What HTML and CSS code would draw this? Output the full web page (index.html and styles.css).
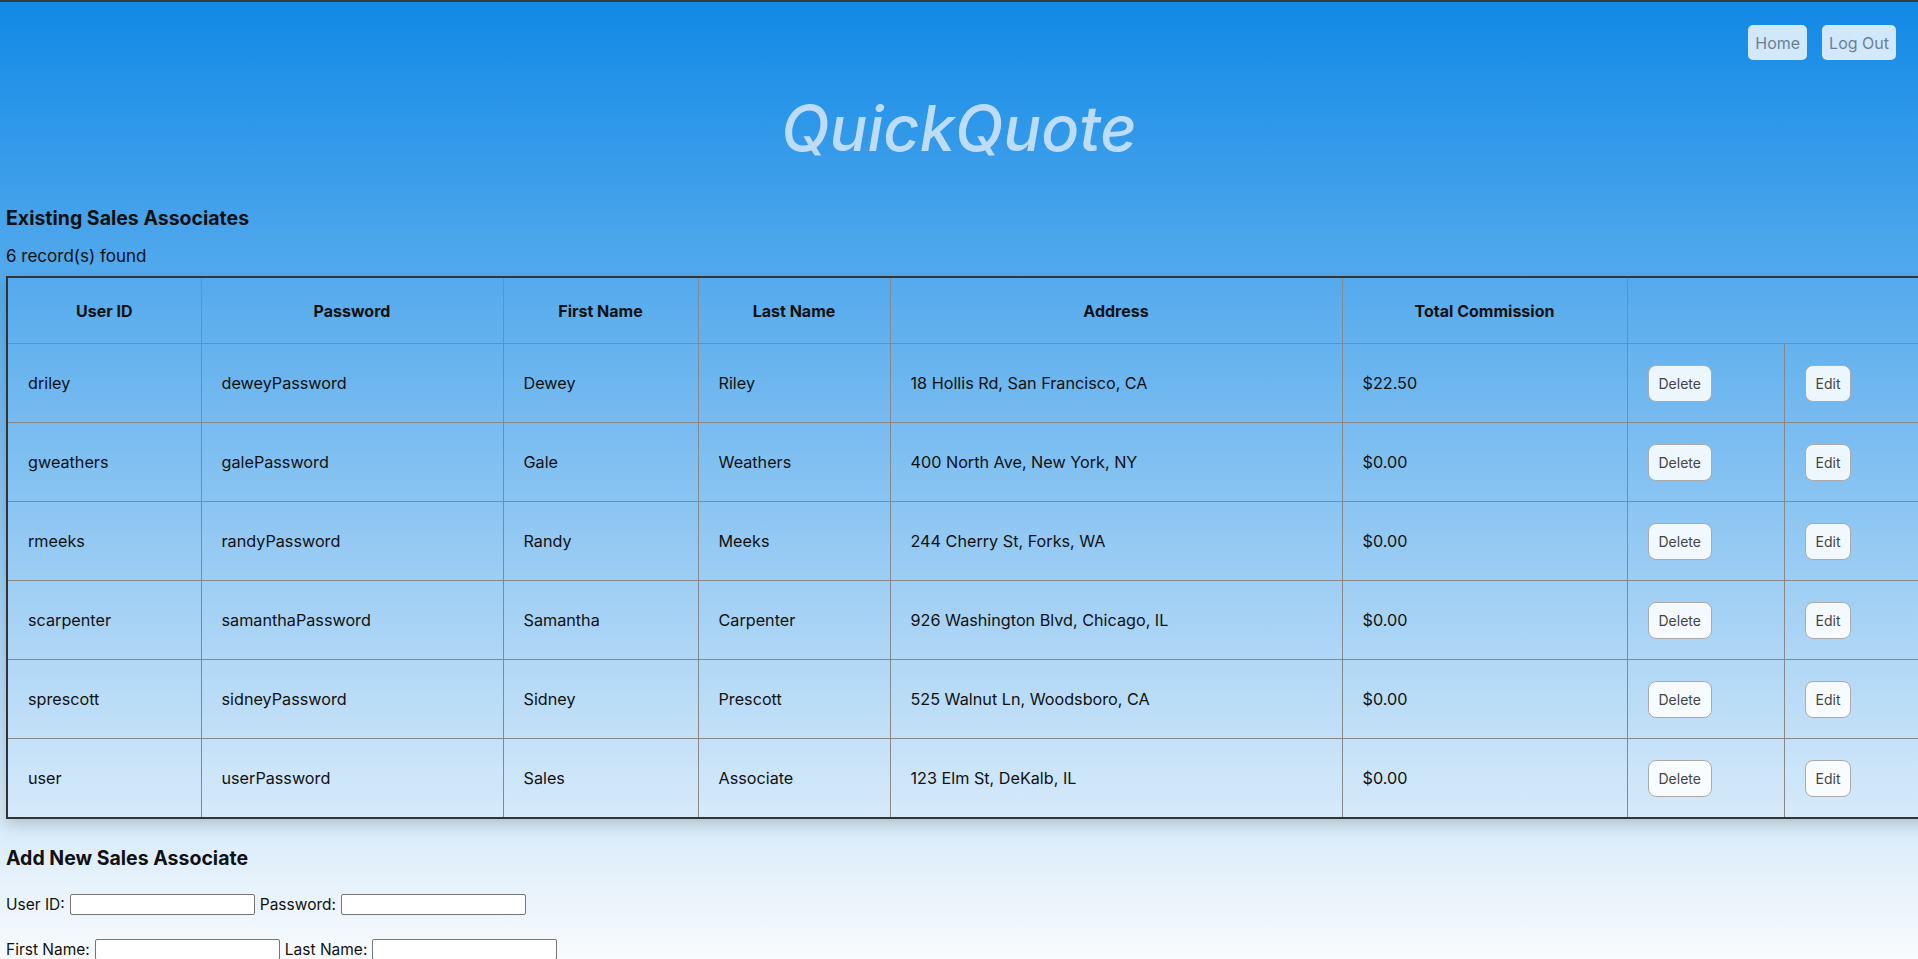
FILE: index.html
```html
<!DOCTYPE html>
<html lang="en">
<head>
<meta charset="utf-8">
<title>QuickQuote - Sales Associates</title>
<link rel="stylesheet" href="styles.css">
</head>
<body>
<header class="topbar">
  <nav class="nav">
    <a class="nav-btn" href="#">Home</a>
    <a class="nav-btn" href="#">Log Out</a>
  </nav>
  <h1 class="brand">QuickQuote</h1>
</header>
<main class="content">
  <section class="existing">
    <h3 class="section-title">Existing Sales Associates</h3>
    <p class="count">6 record(s) found</p>
    <table class="grid">
      <colgroup>
        <col class="c-id"><col class="c-pw"><col class="c-first"><col class="c-last"><col class="c-addr"><col class="c-comm"><col class="c-del"><col class="c-edit">
      </colgroup>
      <thead>
        <tr><th>User ID</th><th>Password</th><th>First Name</th><th>Last Name</th><th>Address</th><th>Total Commission</th><th colspan="2"></th></tr>
      </thead>
      <tbody>
        <tr><td>driley</td><td>deweyPassword</td><td>Dewey</td><td>Riley</td><td>18 Hollis Rd, San Francisco, CA</td><td>$22.50</td><td><button class="btn">Delete</button></td><td><button class="btn">Edit</button></td></tr>
        <tr><td>gweathers</td><td>galePassword</td><td>Gale</td><td>Weathers</td><td>400 North Ave, New York, NY</td><td>$0.00</td><td><button class="btn">Delete</button></td><td><button class="btn">Edit</button></td></tr>
        <tr><td>rmeeks</td><td>randyPassword</td><td>Randy</td><td>Meeks</td><td>244 Cherry St, Forks, WA</td><td>$0.00</td><td><button class="btn">Delete</button></td><td><button class="btn">Edit</button></td></tr>
        <tr><td>scarpenter</td><td>samanthaPassword</td><td>Samantha</td><td>Carpenter</td><td>926 Washington Blvd, Chicago, IL</td><td>$0.00</td><td><button class="btn">Delete</button></td><td><button class="btn">Edit</button></td></tr>
        <tr><td>sprescott</td><td>sidneyPassword</td><td>Sidney</td><td>Prescott</td><td>525 Walnut Ln, Woodsboro, CA</td><td>$0.00</td><td><button class="btn">Delete</button></td><td><button class="btn">Edit</button></td></tr>
        <tr><td>user</td><td>userPassword</td><td>Sales</td><td>Associate</td><td>123 Elm St, DeKalb, IL</td><td>$0.00</td><td><button class="btn">Delete</button></td><td><button class="btn">Edit</button></td></tr>
      </tbody>
    </table>
  </section>
  <section class="add">
    <h3 class="section-title add-title">Add New Sales Associate</h3>
    <form class="add-form">
      <div class="form-row">
        <label for="uid">User ID:</label><input id="uid" type="text">
        <label for="pw">Password:</label><input id="pw" type="text">
      </div>
      <div class="form-row">
        <label for="fn">First Name:</label><input id="fn" type="text">
        <label for="ln">Last Name:</label><input id="ln" type="text">
      </div>
      <div class="form-row">
        <label for="addr">Address:</label><input id="addr" class="wide" type="text">
      </div>
      <div class="form-row">
        <button class="btn" type="button">Add Sales Associate</button>
      </div>
    </form>
  </section>
</main>
</body>
</html>
```
FILE: styles.css
```css
html {
  border-top: 2px solid #3a3a3a;
  background: #f9fbfd linear-gradient(180deg, #1189e6 0px, #f9fbfd 958px) no-repeat;
}
body {
  margin: 0;
  font-family: Inter, "Noto Sans", sans-serif;
  font-size: 16px;
  color: #111;
}
.nav {
  display: flex;
  justify-content: flex-end;
  gap: 15px;
  padding: 23px 22px 0 0;
}
.nav-btn {
  display: flex;
  align-items: center;
  height: 35px;
  padding: 0 7px;
  background: rgba(255, 255, 255, 0.8);
  color: #6b7f94;
  border-radius: 5px;
  text-decoration: none;
  font-size: 16px;
}
.brand {
  margin: 32px 0 0;
  text-align: center;
  font-style: italic;
  font-weight: 500;
  font-size: 63px;
  line-height: 72px;
  color: #bddcf7;
}
.content {
  padding: 0 6px 40px;
}
.section-title {
  margin: 43px 0 0;
  font-size: 19.5px;
  line-height: 23px;
  font-weight: 700;
}
.count {
  margin: 16px 0 10px;
  font-size: 17px;
  line-height: 20px;
}
.grid {
  width: 1934px;
  table-layout: fixed;
  border-collapse: collapse;
  border: 2px solid #333;
  box-shadow: 0 6px 14px rgba(0, 0, 0, 0.16);
}
.c-id { width: 194px; }
.c-pw { width: 302px; }
.c-first { width: 195px; }
.c-last { width: 192px; }
.c-addr { width: 452px; }
.c-comm { width: 285px; }
.c-del { width: 157px; }
.c-edit { width: 157px; }
.grid th {
  height: 65px;
  padding: 0;
  border: 1px solid #888;
  font-size: 16px;
  font-weight: 700;
  text-align: center;
}
.grid td {
  height: 78px;
  padding: 0 20px;
  border: 1px solid #888;
  font-size: 16.2px;
  vertical-align: middle;
}
.btn {
  height: 37px;
  padding: 0 10px;
  font-family: Inter, "Noto Sans", sans-serif;
  font-size: 14px;
  color: #444;
  background: rgba(255, 255, 255, 0.87);
  border: 1px solid #aaa;
  border-radius: 8px;
}
.add-title {
  margin-top: 28px;
}
.form-row {
  display: flex;
  align-items: center;
  gap: 5px;
  height: 21px;
  margin-top: 24px;
  font-size: 15.5px;
}
.form-row input {
  width: 185px;
  height: 21px;
  box-sizing: border-box;
  border: 1px solid #767676;
  border-radius: 2px;
  background: #fff;
}
.form-row input.wide {
  width: 300px;
}
```
